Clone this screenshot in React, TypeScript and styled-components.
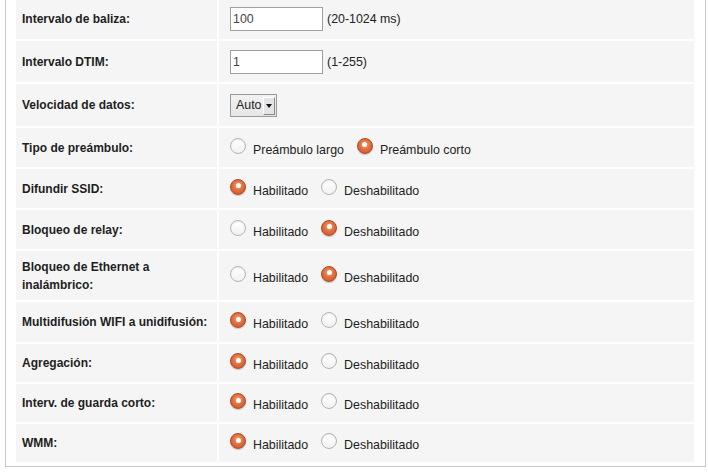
import styled, { createGlobalStyle } from 'styled-components'

const GlobalStyle = createGlobalStyle`
  html, body {
    margin: 0;
    padding: 0;
    background: #ffffff;
    overflow: hidden;
  }
  body {
    font-family: 'Liberation Sans', Arial, sans-serif;
    font-size: 12px;
    color: #222;
  }
`

const Panel = styled.div`
  margin: 0 2px 0 5px;
  border: 1px solid #c9c9c9;
  border-top: none;
  padding: 0 9px 4px 8px;
  height: 467px;
  box-sizing: border-box;
  overflow: hidden;
`

const Table = styled.table`
  width: 100%;
  border-spacing: 2px;
  margin-top: -4px;
`

const Row = styled.tr<{ $h?: number }>`
  height: ${(p) => p.$h ?? 39}px;
`

const LabelCell = styled.td`
  width: 189px;
  background: #f5f5f5;
  padding: 0 6px;
  font-weight: bold;
  font-size: 12px;
  line-height: 18px;
  color: #1e1e1e;
  vertical-align: middle;
`

const ValueCell = styled.td`
  background: #f5f5f5;
  padding: 0 0 0 11px;
  vertical-align: middle;
  font-size: 12.4px;
  color: #222;
`

const Inline = styled.div`
  display: flex;
  align-items: center;
  gap: 4px;
`

const TextInput = styled.input`
  width: 93px;
  height: 24px;
  box-sizing: border-box;
  border: 1px solid #a0a0a0;
  background: #fff;
  padding: 0 2px;
  font-family: 'Liberation Sans', Arial, sans-serif;
  font-size: 12.4px;
  color: #444;
  outline: none;
`

const SelectBox = styled.div`
  display: inline-flex;
  align-items: stretch;
  width: 47px;
  height: 23px;
  box-sizing: border-box;
  border: 1px solid #9a9a9a;
  background: linear-gradient(#f2f2f2, #e6e6e6);
`

const SelectText = styled.span`
  flex: 1;
  display: flex;
  align-items: center;
  padding-left: 5px;
  color: #222;
`

const SelectArrow = styled.span`
  width: 10px;
  margin: 2px 1px 1px 0;
  border-left: 1px solid #fff;
  border-top: 1px solid #fff;
  border-right: 1px solid #8a8a8a;
  border-bottom: 1px solid #8a8a8a;
  background: #e4e4e4;
  display: flex;
  align-items: center;
  justify-content: center;

  &::after {
    content: '';
    border-left: 3px solid transparent;
    border-right: 3px solid transparent;
    border-top: 4px solid #111;
  }
`

const RadioGroup = styled.div`
  display: flex;
  align-items: center;
  padding-top: 4px;
`

const Option = styled.label`
  display: inline-flex;
  align-items: center;
  margin-right: 13px;
  color: #222;
`

const Radio = styled.span<{ $on?: boolean }>`
  width: 16px;
  height: 16px;
  box-sizing: border-box;
  border-radius: 50%;
  margin-right: 7px;
  transform: translateY(-4px);
  position: relative;
  border: 1px solid ${(p) => (p.$on ? '#b2461f' : '#b4b4b4')};
  background: ${(p) =>
    p.$on
      ? 'radial-gradient(circle at 50% 40%, #f6a57e 0%, #e0703f 45%, #c4532a 100%)'
      : 'linear-gradient(#ffffff, #f1f1f1)'};
  box-shadow: ${(p) => (p.$on ? '0 1px 1px rgba(0,0,0,0.2)' : 'inset 0 1px 1px rgba(0,0,0,0.08)')};

  &::after {
    content: '';
    display: ${(p) => (p.$on ? 'block' : 'none')};
    position: absolute;
    left: 50%;
    top: 45%;
    width: 5px;
    height: 5px;
    margin: -2.5px 0 0 -2.5px;
    border-radius: 50%;
    background: #fff;
  }
`

type RadioRow = { label: string; options: string[]; checked: number; h?: number }

const radioRows: RadioRow[] = [
  { label: 'Tipo de preámbulo:', options: ['Preámbulo largo', 'Preámbulo corto'], checked: 1 },
  { label: 'Difundir SSID:', options: ['Habilitado', 'Deshabilitado'], checked: 0 },
  { label: 'Bloqueo de relay:', options: ['Habilitado', 'Deshabilitado'], checked: 1 },
  { label: 'Bloqueo de Ethernet a inalámbrico:', options: ['Habilitado', 'Deshabilitado'], checked: 1, h: 49 },
  { label: 'Multidifusión WIFI a unidifusión:', options: ['Habilitado', 'Deshabilitado'], checked: 0, h: 40 },
  { label: 'Agregación:', options: ['Habilitado', 'Deshabilitado'], checked: 0, h: 38 },
  { label: 'Interv. de guarda corto:', options: ['Habilitado', 'Deshabilitado'], checked: 0, h: 38 },
  { label: 'WMM:', options: ['Habilitado', 'Deshabilitado'], checked: 0, h: 38 },
]

export default function App() {
  return (
    <>
      <GlobalStyle />
      <Panel>
        <Table>
          <tbody>
            <Row $h={41}>
              <LabelCell>Intervalo de baliza:</LabelCell>
              <ValueCell>
                <Inline>
                  <TextInput defaultValue="100" />
                  <span>(20-1024 ms)</span>
                </Inline>
              </ValueCell>
            </Row>
            <Row $h={41}>
              <LabelCell>Intervalo DTIM:</LabelCell>
              <ValueCell>
                <Inline>
                  <TextInput defaultValue="1" />
                  <span>(1-255)</span>
                </Inline>
              </ValueCell>
            </Row>
            <Row $h={42}>
              <LabelCell>Velocidad de datos:</LabelCell>
              <ValueCell>
                <SelectBox>
                  <SelectText>Auto</SelectText>
                  <SelectArrow />
                </SelectBox>
              </ValueCell>
            </Row>
            {radioRows.map((r) => (
              <Row key={r.label} $h={r.h}>
                <LabelCell>{r.label}</LabelCell>
                <ValueCell>
                  <RadioGroup>
                    {r.options.map((o, i) => (
                      <Option key={o}>
                        <Radio $on={i === r.checked} />
                        {o}
                      </Option>
                    ))}
                  </RadioGroup>
                </ValueCell>
              </Row>
            ))}
          </tbody>
        </Table>
      </Panel>
    </>
  )
}
